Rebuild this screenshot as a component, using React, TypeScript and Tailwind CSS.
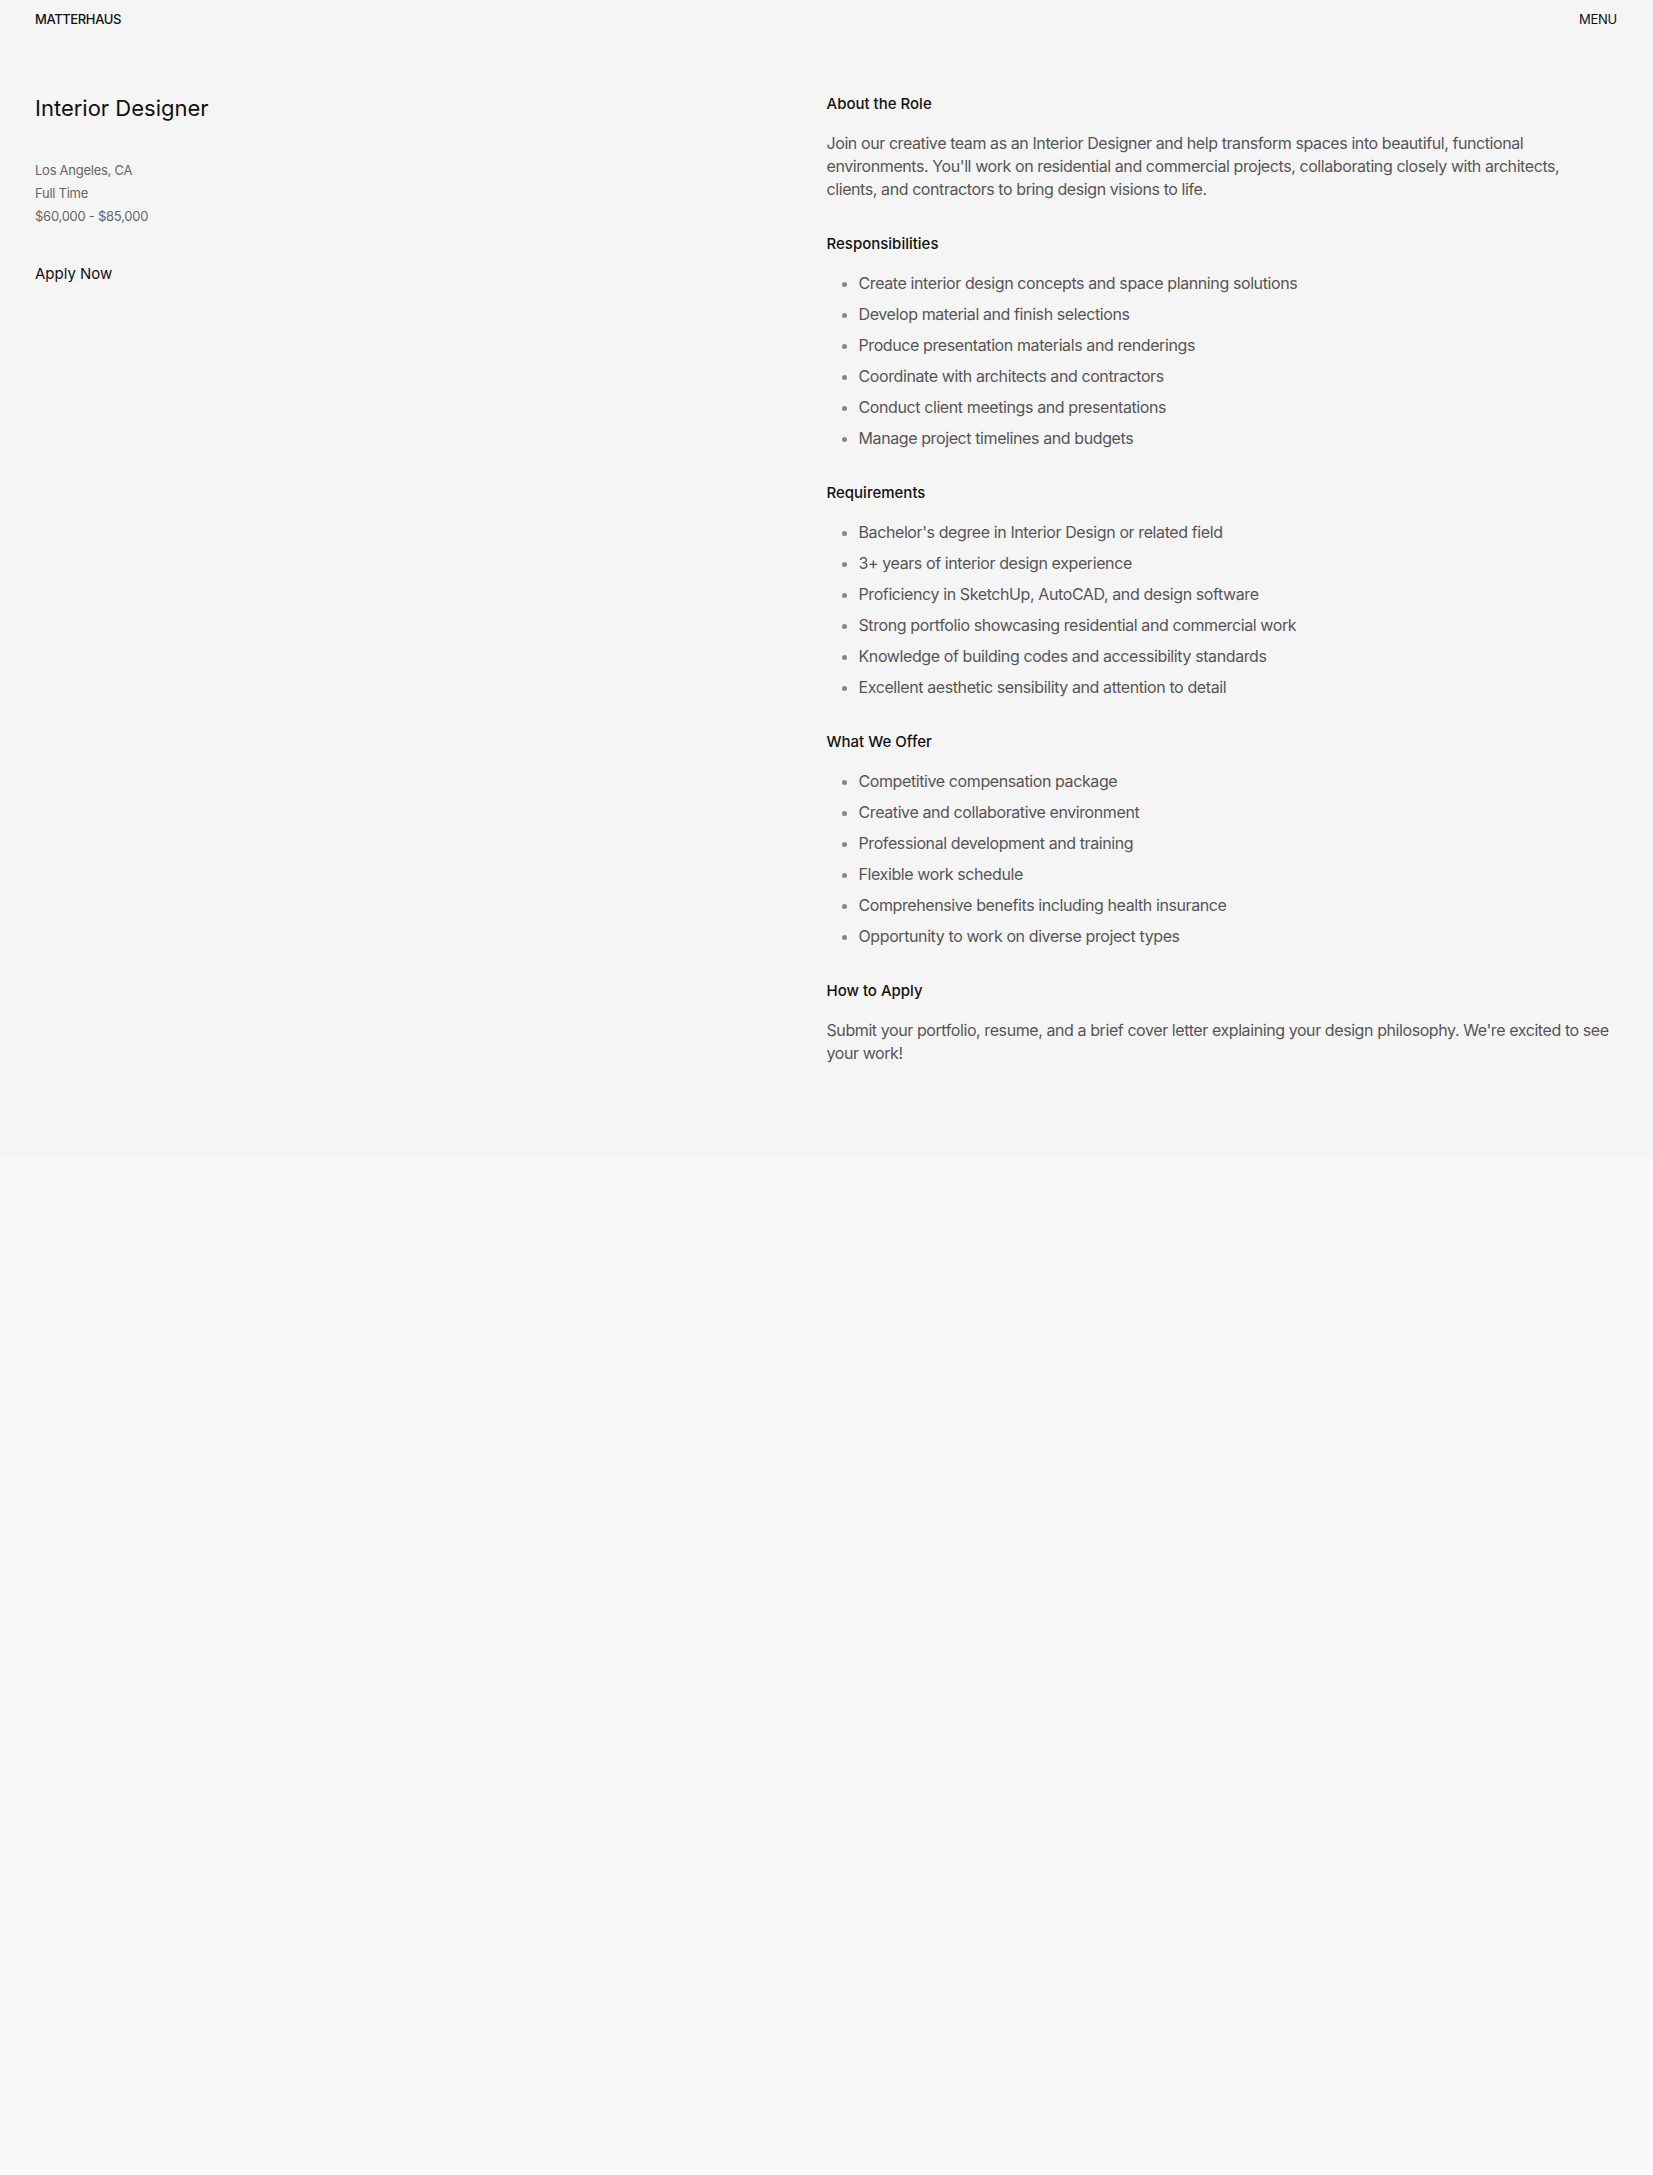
import React from 'react';

const sections: { title: string; items: string[] }[] = [
    {
        title: 'Responsibilities',
        items: [
            'Create interior design concepts and space planning solutions',
            'Develop material and finish selections',
            'Produce presentation materials and renderings',
            'Coordinate with architects and contractors',
            'Conduct client meetings and presentations',
            'Manage project timelines and budgets',
        ],
    },
    {
        title: 'Requirements',
        items: [
            "Bachelor's degree in Interior Design or related field",
            '3+ years of interior design experience',
            'Proficiency in SketchUp, AutoCAD, and design software',
            'Strong portfolio showcasing residential and commercial work',
            'Knowledge of building codes and accessibility standards',
            'Excellent aesthetic sensibility and attention to detail',
        ],
    },
    {
        title: 'What We Offer',
        items: [
            'Competitive compensation package',
            'Creative and collaborative environment',
            'Professional development and training',
            'Flexible work schedule',
            'Comprehensive benefits including health insurance',
            'Opportunity to work on diverse project types',
        ],
    },
];

const Heading: React.FC<{ children: React.ReactNode }> = ({ children }) => (
    <h3 className="text-[15px] leading-[22px] font-medium text-[#111]">{children}</h3>
);

export default function App() {
    return (
        <div className="min-h-screen bg-[#faf9f7] font-['Inter',sans-serif] antialiased">
            <div className="bg-[#f5f5f5] pb-[93px]">
                {/* Top bar */}
                <header className="flex justify-between items-center px-[35px] pt-[9px] text-[13px] leading-[20px] text-[#111]">
                    <span className="font-medium tracking-[-0.03em]">MATTERHAUS</span>
                    <button className="mr-[1px] tracking-[-0.02em]">MENU</button>
                </header>

                <main className="grid grid-cols-2 px-[35px] pt-[64px]">
                    {/* Left column */}
                    <div>
                        <h1 className="text-[22px] leading-[30px] text-[#111]">Interior Designer</h1>
                        <div className="mt-[36px] text-[13px] leading-[23px] text-[#666] tracking-[-0.02em]">
                            <p>Los Angeles, CA</p>
                            <p>Full Time</p>
                            <p>$60,000 - $85,000</p>
                        </div>
                        <a href="#" className="block mt-[34px] text-[15px] leading-[24px] text-[#111]">
                            Apply Now
                        </a>
                    </div>

                    {/* Right column */}
                    <div className="space-y-8 pr-[7px]">
                        <section>
                            <Heading>About the Role</Heading>
                            <p className="mt-[17px] text-[16px] leading-[23px] text-[#555] tracking-[-0.026em]">
                                Join our creative team as an Interior Designer and help transform spaces into beautiful, functional
                                environments. You'll work on residential and commercial projects, collaborating closely with architects,
                                clients, and contractors to bring design visions to life.
                            </p>
                        </section>

                        {sections.map((s) => (
                            <section key={s.title}>
                                <Heading>{s.title}</Heading>
                                <ul className="mt-[17px] space-y-2 list-disc pl-[32px] marker:text-[#888] text-[16px] leading-[23px] text-[#555] tracking-[-0.025em]">
                                    {s.items.map((item) => (
                                        <li key={item}>{item}</li>
                                    ))}
                                </ul>
                            </section>
                        ))}

                        <section>
                            <Heading>How to Apply</Heading>
                            <p className="mt-[17px] text-[16px] leading-[23px] text-[#555] tracking-[-0.026em]">
                                Submit your portfolio, resume, and a brief cover letter explaining your design philosophy. We're excited to see your work!
                            </p>
                        </section>
                    </div>
                </main>
            </div>
        </div>
    );
}
